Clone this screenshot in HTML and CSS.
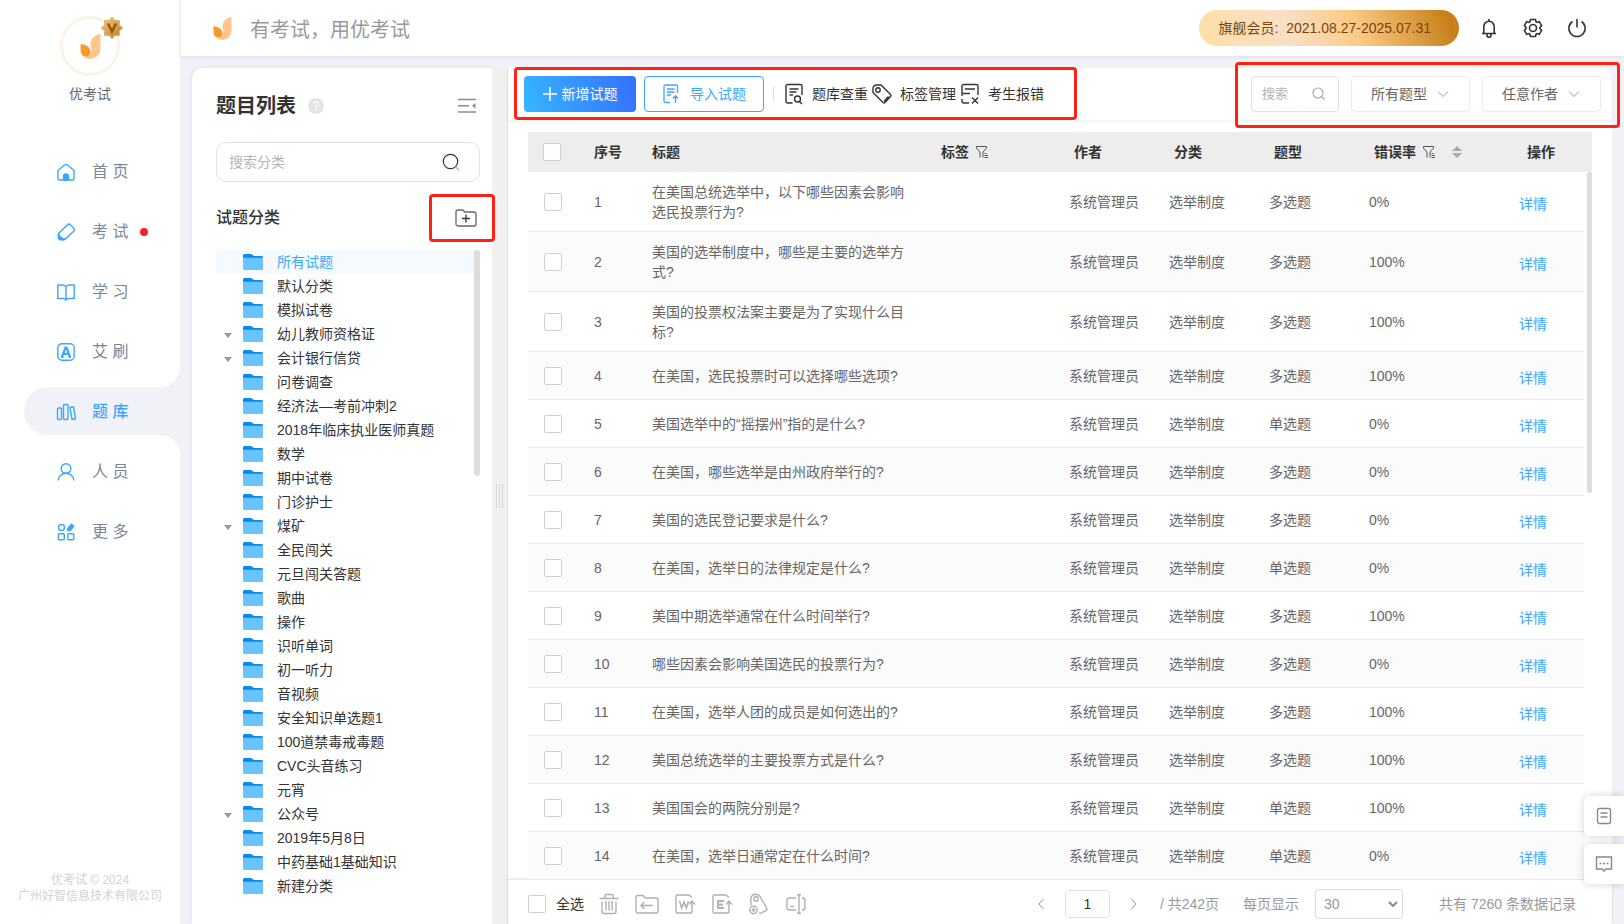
FILE: index.html
```html
<!DOCTYPE html>
<html lang="zh-CN">
<head>
<meta charset="utf-8">
<meta name="viewport" content="width=device-width, initial-scale=1">
<title>优考试 - 题库</title>
<link rel="stylesheet" href="styles.css">
</head>
<body>
<svg class="sprite" width="0" height="0" aria-hidden="true">
  <defs>
    <linearGradient id="gold" x1="0" y1="0" x2="1" y2="1"><stop offset="0" stop-color="#efcf8f"/><stop offset="1" stop-color="#b9771d"/></linearGradient>
  </defs>
  <symbol id="logo" viewBox="0 0 20 24"><path fill="#ffc58f" d="M19.500 0C13 1 10 5 10 11.500c1.500 3 1 6-.5 8-1.500 1.800-4 2.300-6.500 1.700C5 23 7.500 24 10 24a9.500 9.500 0 0 0 9.500-9.500z"/><path fill="#ff962b" d="M.5 9.500C6 9.800 10 13 10 17c0 2.800-1.800 4.500-4.500 4.500C2.500 21.500.5 19 .5 15.500z"/></symbol>
  <symbol id="folder" viewBox="0 0 20 16"><path fill="#008df0" d="M0 1.500A1.500 1.500 0 0 1 1.500 0h6c1.500 0 2.500 2 4 2h7A1.500 1.500 0 0 1 20 3.500V8H0z"/><path fill="#6ac3ff" d="M0 3.800h20V14.500a1.500 1.500 0 0 1-1.500 1.500h-17A1.500 1.500 0 0 1 0 14.500z"/></symbol>
  <symbol id="filter" viewBox="0 0 14 14"><path fill="none" stroke="currentColor" d="M5 12.500V7L1.500 3.200V1.500h10v1.700L8 7v5.500M9.500 8.500h2M9.500 10.500H13M9.500 12.500H13"/></symbol>
  <symbol id="down" viewBox="0 0 12 8"><path fill="none" stroke="currentColor" d="M1 1.500l5 5 5-5"/></symbol>
</svg>

<div class="app">
  <aside class="sidebar">
    <div class="profile">
      <div class="avatar">
        <svg width="21" height="25"><use href="#logo"/></svg>
        <svg class="vip" width="24" height="24" viewBox="0 0 24 24"><path fill="url(#gold)" stroke="#e2b96a" d="M12 1l2.800 3.500 4.700 0v4.700L23 12l-3.500 2.800v4.700h-4.700L12 23l-2.800-3.500H4.500v-4.700L1 12l3.500-2.800V4.500h4.700z"/><path fill="none" stroke="#9a5608" stroke-width="2.400" d="M8 7.500l4 8 4-8"/></svg>
      </div>
      <div class="profile-name">优考试</div>
    </div>
    <nav class="nav">
      <a class="nav-item" href="#"><svg width="20" height="20" viewBox="0 0 20 20"><path d="M3.500 18A1.500 1.500 0 0 1 2 16.500V8.500L8.500 3a2.300 2.300 0 0 1 3 0L18 8.500v8a1.500 1.500 0 0 1-1.500 1.500z"/><path class="solid" d="M7.500 18v-3.500a2.500 2.500 0 0 1 5 0V18z"/></svg><span>首 页</span></a>
      <a class="nav-item" href="#"><svg width="20" height="20" viewBox="0 0 20 20"><path d="M11.500 2.700a2 2 0 0 1 2.800 0l3.500 3.500a2 2 0 0 1 0 2.800l-8 7.800a2 2 0 0 1-1.500.7H4.500A2 2 0 0 1 2.500 15.500V12.500a2 2 0 0 1 .6-1.400z"/><path class="solid" d="M2.500 12c1 2.500 3 4.500 6 5l-1 .8H4L2.500 16z"/></svg><span>考 试</span><i class="dot"></i></a>
      <a class="nav-item" href="#"><svg width="20" height="20" viewBox="0 0 20 20"><path d="M10 4.500C9 3.300 8 3 6 3H1.800v13.500H7c1.500 0 2.500.5 3 1.500.5-1 1.500-1.500 3-1.500h5.200V3H14c-2 0-3 .3-4 1.500zV18"/></svg><span>学 习</span></a>
      <a class="nav-item" href="#"><svg width="20" height="20" viewBox="0 0 20 20"><rect x="1.800" y="1.800" width="16.400" height="16.400" rx="4"/><path stroke-width="2.200" d="M6 15l3.500-9.500h1L14 15M7.500 11.800h5M5 14.800h2.500M12.500 14.800H15"/></svg><span>艾 刷</span></a>
      <a class="nav-item active" href="#"><svg width="20" height="20" viewBox="0 0 20 20"><rect x="1.500" y="6" width="4" height="11.500" rx="1"/><rect x="7.500" y="2.500" width="4.500" height="15" rx="1"/><path d="M14 5.500l2.700-.7a.8.800 0 0 1 .9.600L19.500 16.800l-3.500.7z"/></svg><span>题 库</span></a>
      <a class="nav-item" href="#"><svg width="20" height="20" viewBox="0 0 20 20"><circle cx="10" cy="6.500" r="4.800"/><path d="M2 18.500c.5-4.500 4-7.200 8-7.200s7.500 2.700 8 7.200"/></svg><span>人 员</span></a>
      <a class="nav-item" href="#"><svg width="20" height="20" viewBox="0 0 20 20"><circle cx="5.500" cy="5.500" r="3"/><rect x="2.300" y="11.800" width="6" height="6" rx="1"/><rect x="11.800" y="11.800" width="6" height="6" rx="1"/><path class="solid" d="M11.800 6.500L15.500 2.300l2.300 1.800-3.600 4.400h-2.400z"/></svg><span>更 多</span></a>
    </nav>
    <footer class="copyright">优考试 © 2024<br>广州好智信息技术有限公司</footer>
  </aside>

  <div class="page">
    <header class="topbar">
      <svg width="19" height="23"><use href="#logo"/></svg>
      <div class="slogan">有考试，用优考试</div>
      <div class="member">旗舰会员: &nbsp;2021.08.27-2025.07.31</div>
      <div class="top-icons">
        <button type="button" aria-label="通知"><svg width="20" height="20" viewBox="0 0 20 20"><path d="M3 15.500h14M4.800 15.500V8.500a5.200 5.200 0 0 1 10.400 0v7M10 1v2.500M8 16v1.200a2 2 0 0 0 4 0V16"/></svg></button>
        <button type="button" aria-label="设置"><svg width="20" height="20" viewBox="0 0 20 20"><circle cx="10" cy="10" r="3.500"/><path d="M7.500 1.500h5l.5 2.300 1 .6 2.300-.7 2.300 4-1.600 1.700v1.200l1.600 1.700-2.300 4-2.300-.7-1 .6-.5 2.300h-5L7 16.200l-1-.6-2.300.7-2.300-4L3 10.600V9.400L1.400 7.700l2.300-4 2.300.7 1-.6z"/></svg></button>
        <button type="button" aria-label="退出"><svg width="20" height="20" viewBox="0 0 20 20"><path d="M10 1v8.500M5.500 3.500a8.200 8.200 0 1 0 9 0"/></svg></button>
      </div>
    </header>

    <main class="content">
      <section class="categories">
        <div class="cat-head">
          <h1>题目列表</h1>
          <span class="help">?</span>
          <button class="plain push" type="button" aria-label="收起"><svg width="20" height="18" viewBox="0 0 20 18"><path fill="none" stroke="#8c8c8c" stroke-width="1.600" d="M1 2.500h18M1 8.800h11M1 15h18"/><path fill="#8c8c8c" d="M18.500 6v5.500L15 8.800z"/></svg></button>
        </div>
        <label class="cat-search">
          <input type="text" placeholder="搜索分类" aria-label="搜索分类">
          <svg width="18" height="18" viewBox="0 0 18 18" fill="none"><circle cx="8.500" cy="8.500" r="7.200" stroke="#333" stroke-width="1.200"/><path stroke="#6ac3ff" stroke-width="1.500" d="M13.500 13.500l3.500 3.500"/></svg>
        </label>
        <div class="cat-sub">
          <h2>试题分类</h2>
          <div class="add-wrap">
            <button class="plain" type="button" aria-label="新增分类"><svg width="22" height="18" viewBox="0 0 22 18" fill="none" stroke="#666" stroke-width="1.300"><path d="M1 3a2 2 0 0 1 2-2h4.500c1 0 1.500 2 2.500 2h9a2 2 0 0 1 2 2v10a2 2 0 0 1-2 2H3a2 2 0 0 1-2-2z"/><path stroke="#333" d="M11 5.500v8M7 9.500h8"/></svg></button>
            <i class="mark mark-add"></i>
          </div>
        </div>
        <div class="tree-wrap">
          <ul class="tree">
            <li class="current"><svg><use href="#folder"/></svg>所有试题</li>
            <li><svg><use href="#folder"/></svg>默认分类</li>
            <li><svg><use href="#folder"/></svg>模拟试卷</li>
            <li class="parent"><svg><use href="#folder"/></svg>幼儿教师资格证</li>
            <li class="parent"><svg><use href="#folder"/></svg>会计银行信贷</li>
            <li><svg><use href="#folder"/></svg>问卷调查</li>
            <li><svg><use href="#folder"/></svg>经济法—考前冲刺2</li>
            <li><svg><use href="#folder"/></svg>2018年临床执业医师真题</li>
            <li><svg><use href="#folder"/></svg>数学</li>
            <li><svg><use href="#folder"/></svg>期中试卷</li>
            <li><svg><use href="#folder"/></svg>门诊护士</li>
            <li class="parent"><svg><use href="#folder"/></svg>煤矿</li>
            <li><svg><use href="#folder"/></svg>全民闯关</li>
            <li><svg><use href="#folder"/></svg>元旦闯关答题</li>
            <li><svg><use href="#folder"/></svg>歌曲</li>
            <li><svg><use href="#folder"/></svg>操作</li>
            <li><svg><use href="#folder"/></svg>识听单词</li>
            <li><svg><use href="#folder"/></svg>初一听力</li>
            <li><svg><use href="#folder"/></svg>音视频</li>
            <li><svg><use href="#folder"/></svg>安全知识单选题1</li>
            <li><svg><use href="#folder"/></svg>100道禁毒戒毒题</li>
            <li><svg><use href="#folder"/></svg>CVC头音练习</li>
            <li><svg><use href="#folder"/></svg>元宵</li>
            <li class="parent"><svg><use href="#folder"/></svg>公众号</li>
            <li><svg><use href="#folder"/></svg>2019年5月8日</li>
            <li><svg><use href="#folder"/></svg>中药基础1基础知识</li>
            <li><svg><use href="#folder"/></svg>新建分类</li>
          </ul>
          <i class="thumb tree-thumb"></i>
        </div>
      </section>
      <div class="splitter"><i></i></div>

      <section class="questions">
        <div class="toolbar">
          <div class="actions">
            <button class="btn primary" type="button"><svg width="14" height="14" viewBox="0 0 14 14"><path stroke="#fff" stroke-width="1.500" d="M7 0v14M0 7h14"/></svg>新增试题</button>
            <button class="btn outline" type="button"><svg width="18" height="20" viewBox="0 0 18 20" fill="none" stroke="#3ba7ff" stroke-width="1.300"><path d="M8 18.500H3.500A1.500 1.500 0 0 1 2 17V2.500A1.500 1.500 0 0 1 3.500 1H14a1.500 1.500 0 0 1 1.500 1.500V9M5 5h7.500M5 8h7.500M5 11h4M13.500 19v-7M11 14.500l2.500-2.700 2.500 2.700"/></svg>导入试题</button>
            <i class="divider"></i>
            <button class="tool" type="button"><svg width="20" height="22" viewBox="0 0 20 22"><path d="M8.500 20H4a2 2 0 0 1-2-2V3.500a2 2 0 0 1 2-2h12a2 2 0 0 1 2 2V12M5.500 6h9M5.500 9h7M5.500 12H9"/><circle cx="13.500" cy="16" r="3"/><path d="M15.500 18.500L18 21"/></svg>题库查重</button>
            <button class="tool" type="button"><svg width="20" height="22" viewBox="0 0 20 22"><path d="M1 5.500A3.500 3.500 0 0 1 4.500 2H9L18.500 11.500a1.500 1.500 0 0 1 0 2L13 19.500a1.500 1.500 0 0 1-2 0L1 9.500zM16.500 13.500L12 18.500"/><circle cx="6" cy="7" r="2.200"/></svg>标签管理</button>
            <button class="tool" type="button"><svg width="20" height="22" viewBox="0 0 20 22"><path d="M9 20H4a2 2 0 0 1-2-2v-2M2 13V3.500a2 2 0 0 1 2-2h12a2 2 0 0 1 2 2V12M5 6h10M2 10.500h8M12 14.500l6 6M18 14.500l-6 6"/></svg>考生报错</button>
            <i class="mark mark-actions"></i>
          </div>
          <div class="filters">
            <label class="filter-search"><input type="text" placeholder="搜索" aria-label="搜索"><svg width="14" height="14" viewBox="0 0 14 14" fill="none" stroke="#aaa" stroke-width="1.200"><circle cx="6" cy="6" r="5"/><path d="M9.500 9.500l3 3"/></svg></label>
            <label class="filter-select"><select aria-label="题型"><option>所有题型</option></select><svg width="12" height="8"><use href="#down"/></svg></label>
            <label class="filter-select"><select aria-label="作者"><option>任意作者</option></select><svg width="12" height="8"><use href="#down"/></svg></label>
            <i class="mark mark-filters"></i>
          </div>
        </div>

        <div class="table-wrap">
          <table class="grid">
            <colgroup><col class="c-check"><col class="c-no"><col class="c-title"><col class="c-tag"><col class="c-author"><col class="c-cat"><col class="c-type"><col class="c-rate"><col class="c-op"><col class="c-gutter"></colgroup>
            <thead>
              <tr><th><input type="checkbox" aria-label="选择全部"></th><th>序号</th><th>标题</th><th>标签 <svg class="f-icon"><use href="#filter"/></svg></th><th class="in">作者</th><th class="in">分类</th><th class="in">题型</th><th class="in">错误率 <svg class="f-icon"><use href="#filter"/></svg><svg class="s-icon" viewBox="0 0 10 12"><path fill="#aaa" d="M5 0l5 5H0zM0 7h10l-5 5z"/></svg></th><th class="in">操作</th><th></th></tr>
            </thead>
            <tbody>
              <tr class="tall"><td><input type="checkbox" aria-label="选择 1"></td><td>1</td><td>在美国总统选举中，以下哪些因素会影响选民投票行为?</td><td></td><td>系统管理员</td><td>选举制度</td><td>多选题</td><td>0%</td><td><a href="#">详情</a></td><td></td></tr>
              <tr class="tall"><td><input type="checkbox" aria-label="选择 2"></td><td>2</td><td>美国的选举制度中，哪些是主要的选举方式?</td><td></td><td>系统管理员</td><td>选举制度</td><td>多选题</td><td>100%</td><td><a href="#">详情</a></td><td></td></tr>
              <tr class="tall"><td><input type="checkbox" aria-label="选择 3"></td><td>3</td><td>美国的投票权法案主要是为了实现什么目标?</td><td></td><td>系统管理员</td><td>选举制度</td><td>多选题</td><td>100%</td><td><a href="#">详情</a></td><td></td></tr>
              <tr><td><input type="checkbox" aria-label="选择 4"></td><td>4</td><td>在美国，选民投票时可以选择哪些选项?</td><td></td><td>系统管理员</td><td>选举制度</td><td>多选题</td><td>100%</td><td><a href="#">详情</a></td><td></td></tr>
              <tr><td><input type="checkbox" aria-label="选择 5"></td><td>5</td><td>美国选举中的“摇摆州”指的是什么?</td><td></td><td>系统管理员</td><td>选举制度</td><td>单选题</td><td>0%</td><td><a href="#">详情</a></td><td></td></tr>
              <tr><td><input type="checkbox" aria-label="选择 6"></td><td>6</td><td>在美国，哪些选举是由州政府举行的?</td><td></td><td>系统管理员</td><td>选举制度</td><td>多选题</td><td>0%</td><td><a href="#">详情</a></td><td></td></tr>
              <tr><td><input type="checkbox" aria-label="选择 7"></td><td>7</td><td>美国的选民登记要求是什么?</td><td></td><td>系统管理员</td><td>选举制度</td><td>多选题</td><td>0%</td><td><a href="#">详情</a></td><td></td></tr>
              <tr><td><input type="checkbox" aria-label="选择 8"></td><td>8</td><td>在美国，选举日的法律规定是什么?</td><td></td><td>系统管理员</td><td>选举制度</td><td>单选题</td><td>0%</td><td><a href="#">详情</a></td><td></td></tr>
              <tr><td><input type="checkbox" aria-label="选择 9"></td><td>9</td><td>美国中期选举通常在什么时间举行?</td><td></td><td>系统管理员</td><td>选举制度</td><td>多选题</td><td>100%</td><td><a href="#">详情</a></td><td></td></tr>
              <tr><td><input type="checkbox" aria-label="选择 10"></td><td>10</td><td>哪些因素会影响美国选民的投票行为?</td><td></td><td>系统管理员</td><td>选举制度</td><td>多选题</td><td>0%</td><td><a href="#">详情</a></td><td></td></tr>
              <tr><td><input type="checkbox" aria-label="选择 11"></td><td>11</td><td>在美国，选举人团的成员是如何选出的?</td><td></td><td>系统管理员</td><td>选举制度</td><td>多选题</td><td>100%</td><td><a href="#">详情</a></td><td></td></tr>
              <tr><td><input type="checkbox" aria-label="选择 12"></td><td>12</td><td>美国总统选举的主要投票方式是什么?</td><td></td><td>系统管理员</td><td>选举制度</td><td>多选题</td><td>100%</td><td><a href="#">详情</a></td><td></td></tr>
              <tr><td><input type="checkbox" aria-label="选择 13"></td><td>13</td><td>美国国会的两院分别是?</td><td></td><td>系统管理员</td><td>选举制度</td><td>单选题</td><td>100%</td><td><a href="#">详情</a></td><td></td></tr>
              <tr><td><input type="checkbox" aria-label="选择 14"></td><td>14</td><td>在美国，选举日通常定在什么时间?</td><td></td><td>系统管理员</td><td>选举制度</td><td>单选题</td><td>0%</td><td><a href="#">详情</a></td><td></td></tr>
            </tbody>
          </table>
          <i class="thumb grid-thumb"></i>
        </div>

        <div class="bottombar">
          <label class="select-all"><input type="checkbox">全选</label>
          <div class="bulk">
            <button class="plain" type="button" aria-label="删除"><svg width="22" height="22" viewBox="0 0 22 22"><path d="M1.500 5.500h19M7 5.500V3a1.500 1.500 0 0 1 1.500-1.500h5A1.500 1.500 0 0 1 15 3v2.500M4 8.500V19a1.500 1.500 0 0 0 1.500 1.500h11A1.500 1.500 0 0 0 18 19V8.500M8 8v9.500M11 8v9.500M14 8v9.500"/></svg></button>
            <button class="plain" type="button" aria-label="移动"><svg width="24" height="22" viewBox="0 0 24 22"><path d="M1 4.500a2 2 0 0 1 2-2h5l2.500 2.500H21a2 2 0 0 1 2 2v11a2 2 0 0 1-2 2H3a2 2 0 0 1-2-2zM18 12.500H6M9.500 9L6 12.500 9.500 16"/></svg></button>
            <button class="plain" type="button" aria-label="导出 Word"><svg width="22" height="22" viewBox="0 0 22 22"><path d="M18 4.500L15 2H3.500A1.500 1.500 0 0 0 2 3.500v15A1.500 1.500 0 0 0 3.500 20h13a1.500 1.500 0 0 0 1.500-1.500V8.500M15 11.500l3-3.500 3 3.500"/><path stroke-width="1.600" d="M5.500 8l2.200 7L10 9l2.300 6 2.200-7"/></svg></button>
            <button class="plain" type="button" aria-label="导出 Excel"><svg width="22" height="22" viewBox="0 0 22 22"><path d="M18 4.500L15 2H3.500A1.500 1.500 0 0 0 2 3.500v15A1.500 1.500 0 0 0 3.500 20h13a1.500 1.500 0 0 0 1.500-1.500V8.500M15 11.500l3-3.500 3 3.500"/><path stroke-width="1.800" d="M13 8H7v7h6M7 11.500h5"/></svg></button>
            <button class="plain" type="button" aria-label="批量标签"><svg width="22" height="22" viewBox="0 0 22 22"><path d="M3 12.500L2.800 6.500C2.800 3 5 1 8 1.200c2 0 3 .8 4 2.300l7 12-.3 1.500-6 3.300-1.500-.3"/><circle cx="8" cy="6" r="2.200"/><circle cx="5.500" cy="17" r="3.700"/><path d="M5.500 15v4M3.500 17h4"/></svg></button>
            <button class="plain" type="button" aria-label="重命名"><svg width="22" height="22" viewBox="0 0 22 22"><path d="M11 5H4.500A2.500 2.500 0 0 0 2 7.500v7A2.500 2.500 0 0 0 4.500 17H11M5 13.500h4M12 1.800h4M12 20.200h4M14 1.800v18.400M17 5h.500A2.500 2.500 0 0 1 20 7.500v7a2.500 2.500 0 0 1-2.500 2.500H17"/></svg></button>
          </div>
          <div class="pager">
            <button class="plain" type="button" aria-label="上一页"><svg width="8" height="12" viewBox="0 0 8 12"><path d="M6.500 1L2 6l4.500 5"/></svg></button>
            <input class="page-no" type="text" value="1" aria-label="页码">
            <button class="plain" type="button" aria-label="下一页"><svg width="8" height="12" viewBox="0 0 8 12"><path d="M1.500 1L6 6l-4.500 5"/></svg></button>
            <span class="pages">/ 共242页</span>
            <label class="page-size">每页显示
              <span class="size-box"><select><option>30</option></select><svg width="10" height="8" viewBox="0 0 10 8"><path d="M1 2l4 4 4-4"/></svg></span>
            </label>
            <span class="total">共有 7260 条数据记录</span>
          </div>
        </div>
      </section>
    </main>
  </div>

  <div class="floaters">
    <button type="button" aria-label="帮助文档"><svg width="16" height="18" viewBox="0 0 16 18"><rect x="1.500" y="1.500" width="13" height="15" rx="2"/><path d="M4.500 6h7M4.500 10h7"/></svg></button>
    <button type="button" aria-label="在线客服"><svg width="18" height="18" viewBox="0 0 18 18"><path d="M1.500 2h15v12H11l-2 2-2-2H1.500zM4.500 8.500h2M8 8.500h2M11.500 8.500h2"/></svg></button>
  </div>
</div>
</body>
</html>
```

FILE: styles.css
```css
* { box-sizing: border-box; }
body {
  margin: 0;
  font: 14px/20px "Liberation Sans", "Noto Sans CJK SC", sans-serif;
  color: #333;
  background: #f1f2f7;
}
button, input, select { font: inherit; color: inherit; }
button { padding: 0; border: 0; background: none; cursor: pointer; }
a { color: #3ba7ff; text-decoration: none; }
svg { display: block; flex: none; }
.sprite { position: absolute; }

.app { display: flex; height: 100vh; overflow: hidden; }
.page { flex: 1; min-width: 0; display: flex; flex-direction: column; }

/* sidebar */
.sidebar {
  width: 180px;
  flex: none;
  display: flex;
  flex-direction: column;
  background: #fff;
}
.profile { padding-top: 16px; display: flex; flex-direction: column; align-items: center; }
.avatar {
  position: relative;
  width: 60px;
  height: 60px;
  display: grid;
  place-items: center;
  border: 3px solid #faf3e6;
  border-radius: 50%;
}
.vip { position: absolute; top: -3px; right: -7px; }
.profile-name { margin-top: 8px; color: #666; }
.nav { margin-top: 43px; display: flex; flex-direction: column; gap: 12px; }
.nav-item {
  position: relative;
  margin-left: 24px;
  height: 48px;
  padding: 2px 0 0 32px;
  display: flex;
  align-items: center;
  gap: 16px;
  font-size: 16px;
  color: #7c8795;
  border-radius: 24px 0 0 24px;
}
.nav-item svg { fill: none; stroke: #3ba7ff; stroke-width: 1.4; }
.nav-item .solid { fill: #3ba7ff; }
.nav-item.active { background: #f1f2f7; color: #3ba7ff; font-weight: 500; }
.nav-item.active::before, .nav-item.active::after {
  content: "";
  position: absolute;
  right: 0;
  width: 20px;
  height: 20px;
}
.nav-item.active::before { bottom: 100%; background: radial-gradient(circle at 0 0, #fff 20px, #f1f2f7 20px); }
.nav-item.active::after { top: 100%; background: radial-gradient(circle at 0 100%, #fff 20px, #f1f2f7 20px); }
.dot { width: 8px; height: 8px; margin-left: -4px; border-radius: 50%; background: #ff1f28; }
.copyright { margin-top: auto; padding-bottom: 20px; text-align: center; font-size: 12px; line-height: 16px; color: #d2d2d2; }

/* top bar */
.topbar {
  height: 56px;
  flex: none;
  display: flex;
  align-items: center;
  padding: 0 37px 0 32px;
  background: #fff;
  border-left: 1px solid #ebecf1;
  box-shadow: 0 1px 4px rgba(40, 50, 90, .1);
}
.slogan { margin-left: 18px; padding-top: 3px; font-size: 20px; line-height: 28px; color: #999; }
.member {
  margin-left: auto;
  height: 36px;
  line-height: 36px;
  padding: 0 28px 0 20px;
  border-radius: 18px;
  color: #7a430c;
  background: linear-gradient(70deg, #ffdfa6 0%, #f9dfc5 35%, #fbca85 60%, #c77f18 95%);
}
.top-icons { margin-left: 20px; display: flex; gap: 24px; }
.top-icons svg { fill: none; stroke: #333; stroke-width: 1.6; }

/* content */
.content { flex: 1; min-height: 0; display: flex; padding: 12px 12px 0; }
.categories {
  width: 300px;
  flex: none;
  padding: 24px 12px 0 24px;
  background: #fff;
  border-radius: 10px 0 0 0;
  box-shadow: -1px 0 5px rgba(40, 50, 90, .08);
}
.cat-head { display: flex; align-items: center; height: 28px; padding-right: 3px; }
h1 { margin: 0; font-size: 20px; line-height: 28px; font-weight: 700; }
.help {
  width: 16px;
  height: 16px;
  margin-left: 12px;
  border-radius: 50%;
  background: #e4e4e4;
  color: #fff;
  font-size: 12px;
  line-height: 16px;
  text-align: center;
}
.push { margin-left: auto; }
.cat-search {
  display: flex;
  align-items: center;
  height: 40px;
  margin-top: 22px;
  padding: 0 19px 0 12px;
  border: 1px solid #e2e2e2;
  border-radius: 10px;
}
.cat-search input { flex: 1; min-width: 0; padding: 0; border: 0; outline: 0; }
input::placeholder { color: #b4b4b4; opacity: 1; }
.cat-sub { height: 48px; margin-top: 12px; display: flex; align-items: center; justify-content: space-between; }
h2 { margin: 0; font-size: 16px; line-height: 24px; font-weight: 500; }
.add-wrap { position: relative; padding-right: 3px; }
.add-wrap button { display: block; }
.mark { position: absolute; border: 3px solid #ff2112; border-radius: 4px; pointer-events: none; z-index: 3; }
.mark-add { inset: -15px -15px -15px -26px; }
.tree-wrap { position: relative; margin-top: 8px; }
.tree { margin: 0; padding: 0 5px 0 0; list-style: none; }
.tree li { position: relative; height: 24px; padding-left: 27px; display: flex; align-items: center; gap: 14px; }
.tree svg { width: 20px; height: 16px; }
.tree .current { background: #f5faff; border-radius: 4px; color: #3ba7ff; }
.parent::before {
  content: "";
  position: absolute;
  left: 8px;
  top: 11px;
  border: 4px solid transparent;
  border-top: 5px solid #999;
  border-bottom: 0;
}
.thumb { position: absolute; right: 0; top: 0; width: 6px; border-radius: 3px; background: #dcdddf; }
.tree-thumb { height: 226px; }
.splitter { width: 15px; flex: none; display: grid; place-items: center; background: #f0f0f0; }
.splitter i { width: 8px; height: 24px; background: repeating-linear-gradient(90deg, #dadada 0 1px, transparent 1px 3px); }

/* questions */
.questions {
  flex: 1;
  min-width: 0;
  display: flex;
  flex-direction: column;
  background: #fff;
  border-left: 1px solid #e2e2e2;
  border-radius: 0 10px 0 0;
}
.toolbar {
  height: 52px;
  flex: none;
  display: flex;
  align-items: center;
  justify-content: space-between;
  padding: 0 10px 0 16px;
  border-radius: 0 10px 0 0;
  box-shadow: 0 2px 3px rgba(0, 0, 0, .06);
}
.actions, .filters { position: relative; display: flex; align-items: center; }
.btn { height: 36px; display: flex; align-items: center; justify-content: center; border-radius: 4px; }
.primary { width: 112px; gap: 5px; color: #fff; background: linear-gradient(75deg, #36b6ff, #3570ff); }
.outline { width: 120px; margin-left: 8px; gap: 10px; color: #3ba7ff; border: 1px solid #3ba7ff; }
.divider { width: 1px; height: 16px; margin: 0 10px 0 9px; background: #ddd; }
.tool { display: flex; align-items: center; gap: 8px; margin-right: 4px; }
.tool svg { fill: none; stroke: #333; stroke-width: 1.4; }
.mark-actions { inset: -9px -29px -8px -10px; }
.filters { gap: 12px; padding-right: 1px; }
.filter-search {
  width: 88px;
  height: 36px;
  display: flex;
  align-items: center;
  padding: 0 12px 0 10px;
  border: 1px solid #e2e2e2;
  border-radius: 4px;
  font-size: 13px;
}
.filter-search input { flex: 1; min-width: 0; padding: 0; border: 0; outline: 0; }
.filter-select { position: relative; width: 119px; height: 36px; color: #666; }
.filter-select select {
  width: 100%;
  height: 100%;
  padding: 0 32px 0 19px;
  appearance: none;
  border: 1px solid #ebebeb;
  border-radius: 4px;
  background: #fff;
}
.filter-select svg { position: absolute; right: 21px; top: 14px; color: #999; pointer-events: none; }
.mark-filters { inset: -14px -18px -16px -16px; }

.table-wrap { position: relative; flex: 1; min-height: 0; margin: 12px 20px 0; overflow: hidden; }
.grid { width: 100%; border-collapse: separate; border-spacing: 0; table-layout: fixed; }
.c-check { width: 66px; }
.c-no { width: 58px; }
.c-tag { width: 128px; }
.c-author, .c-cat, .c-type { width: 100px; }
.c-rate { width: 150px; }
.c-op { width: 65px; }
.c-gutter { width: 8px; }
.grid th { height: 40px; padding: 0; text-align: left; font-weight: 700; background: #ededed; white-space: nowrap; }
.grid th.in { padding-left: 5px; }
.grid th.in:nth-child(9) { padding-left: 8px; }
.grid td { height: 48px; padding: 0; border-bottom: 1px solid #ebebeb; color: #666; }
.grid .tall td { height: 60px; }
.grid td:nth-child(3) { padding-right: 36px; }
.grid td:last-child { border: 0; }
.grid tbody tr:nth-child(even) td:not(:last-child) { background: #fbfbfb; }
.grid td:first-child { padding-left: 16px; }
.grid th:first-child { padding-left: 15px; }
.grid td a { display: block; padding-top: 4px; }
.f-icon { display: inline-block; width: 14px; height: 14px; margin-left: 2px; vertical-align: -2px; color: #555; }
.s-icon { display: inline-block; width: 10px; height: 12px; margin-left: 16px; vertical-align: -1px; }
input[type="checkbox"] {
  display: block;
  appearance: none;
  width: 18px;
  height: 18px;
  margin: 0;
  border: 1px solid #d0d0d0;
  border-radius: 2px;
  background: #fff;
}
.grid-thumb { top: 40px; width: 5px; height: 321px; }

/* bottom bar */
.bottombar {
  height: 44px;
  flex: none;
  display: flex;
  align-items: center;
  padding: 3px 36px 0 20px;
  box-shadow: 0 -1px 2px rgba(0, 0, 0, .14);
}
.select-all { display: flex; align-items: center; gap: 10px; }
.bulk { display: flex; align-items: center; gap: 15px; margin-left: 14px; }
.bulk svg { fill: none; stroke: #b0b0b0; stroke-width: 1.4; }
.pager { margin-left: auto; display: flex; align-items: center; color: #999; white-space: nowrap; }
.pager svg { fill: none; stroke: #999; }
.page-no { width: 45px; height: 28px; margin: 0 20px; padding: 0; text-align: center; color: #333; border: 1px solid #e2e2e2; border-radius: 4px; }
.pages { margin-left: 22px; }
.page-size { display: flex; align-items: center; gap: 16px; margin-left: 24px; }
.size-box { position: relative; }
.size-box select { display: block; width: 88px; height: 30px; padding: 0 8px; appearance: none; border: 1px solid #dedede; border-radius: 4px; background: #fff; }
.size-box svg { position: absolute; right: 5px; top: 11px; stroke: #888; stroke-width: 2; pointer-events: none; }
.total { margin-left: 36px; }

/* floating buttons */
.floaters { position: fixed; right: 0; bottom: 40px; display: grid; gap: 8px; z-index: 5; }
.floaters button { width: 40px; height: 40px; display: grid; place-items: center; background: #fff; border-radius: 6px 0 0 6px; box-shadow: 0 0 8px rgba(0, 0, 0, .18); }
.floaters svg { fill: none; stroke: #888; stroke-width: 1.4; }
```
